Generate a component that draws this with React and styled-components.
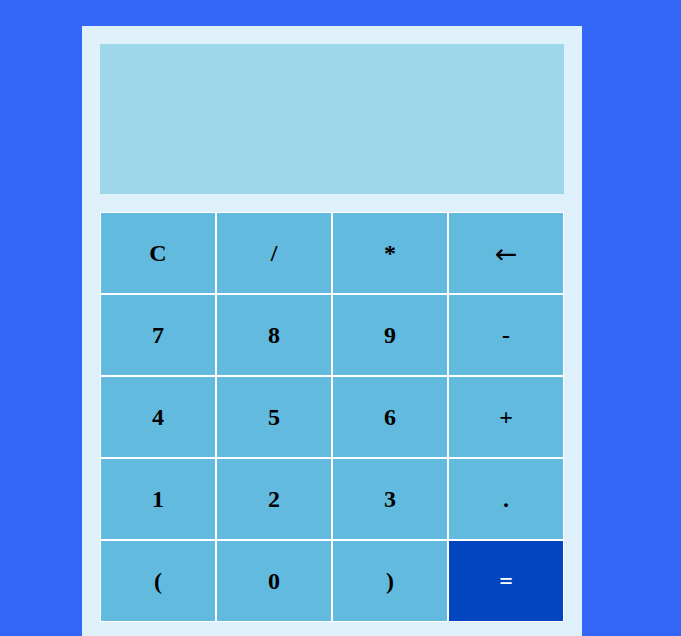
import React from 'react';
import styled, { createGlobalStyle } from 'styled-components';

const GlobalStyle = createGlobalStyle`
    html, body {
        margin: 0;
        padding: 0;
        background-color: #3366f6;
        overflow: hidden;
    }
`;

const Page = styled.div`
    padding: 26px 0 0 82px;
`;

const Calculator = styled.div`
    width: 500px;
    padding: 18px;
    box-sizing: border-box;
    background-color: #def1fb;
`;

const Display = styled.div`
    height: 150px;
    background-color: #9ed6ea;
    margin-bottom: 18px;
`;

const Keys = styled.div`
    display: grid;
    grid-template-columns: repeat(4, 1fr);
`;

const Key = styled.button`
    height: 82px;
    border: 1px solid #ffffff;
    background-color: ${props => (props.$primary ? '#0345c1' : '#62badf')};
    color: ${props => (props.$primary ? '#ffffff' : '#000000')};
    font-family: "Liberation Serif", "Times New Roman", serif;
    font-weight: bold;
    font-size: 24px;
    padding: 0;
    cursor: pointer;
`;

const Arrow = styled.span`
    font-family: "DejaVu Sans", sans-serif;
    font-weight: normal;
    font-size: 27px;
`;

const keys = [
    'C', '/', '*', '←',
    '7', '8', '9', '-',
    '4', '5', '6', '+',
    '1', '2', '3', '.',
    '(', '0', ')', '=',
];

export default function App() {
    return (
        <Page>
            <GlobalStyle />
            <Calculator>
                <Display />
                <Keys>
                    {keys.map(k => (
                        <Key key={k} $primary={k === '='}>
                            {k === '←' ? <Arrow>{k}</Arrow> : k}
                        </Key>
                    ))}
                </Keys>
            </Calculator>
        </Page>
    );
}
